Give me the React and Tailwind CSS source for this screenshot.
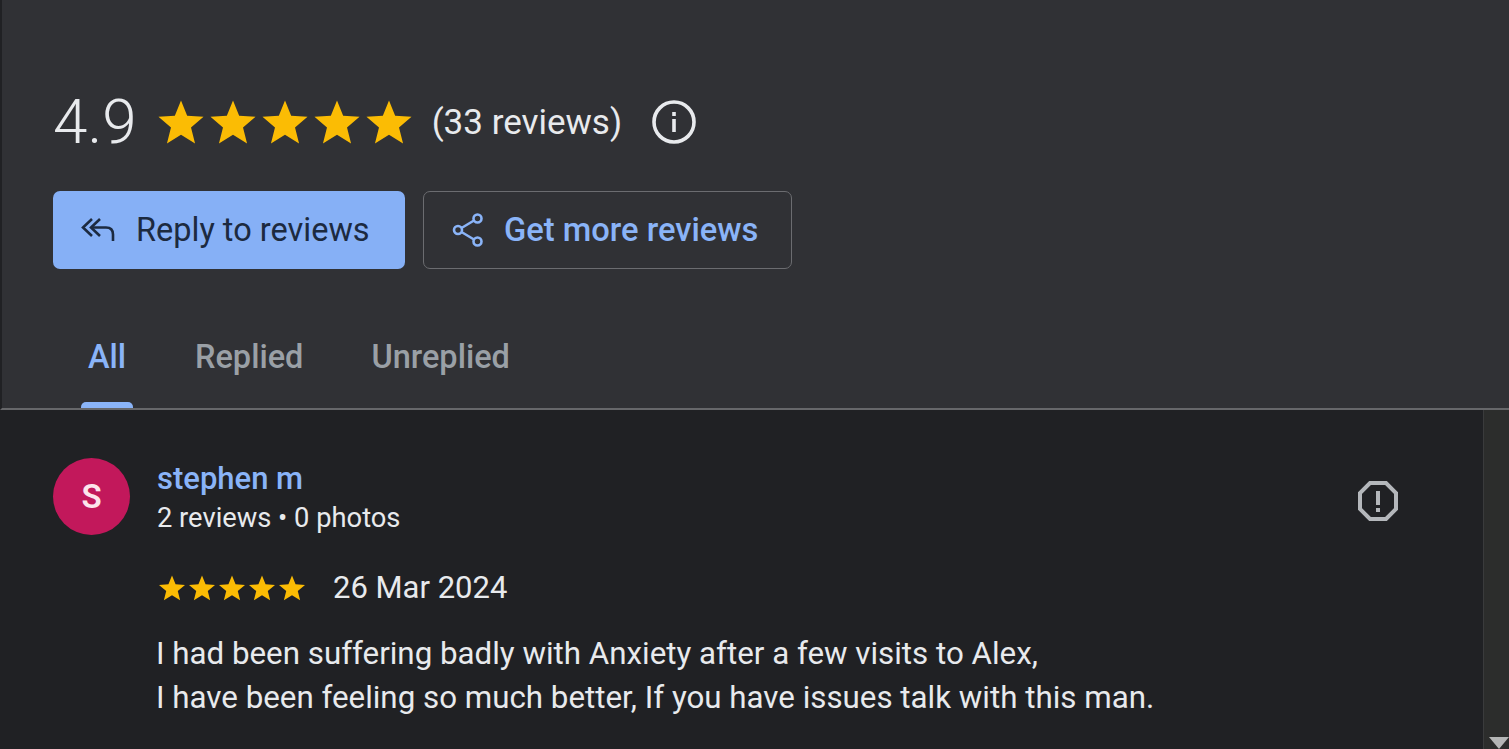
import React from 'react';

const Star = ({ size }) => (
    <svg width={size} height={size} viewBox="-1.5 -1.5 27 27" fill="#fbbc04">
        <path d="M12 .8l3.2 7.9 8.5.6-6.5 5.5 2.1 8.3L12 18.6l-7.3 4.5 2.1-8.3L.3 9.3l8.5-.6z" />
    </svg>
);

const Stars = ({ size, className }) => (
    <div className={`flex ${className}`}>
        {[0, 1, 2, 3, 4].map(i => <Star key={i} size={size} />)}
    </div>
);

const App = () => {
    return (
        <div className="w-[1509px] h-[749px] overflow-hidden flex flex-col bg-[#202124] text-[#e8eaed] font-['Roboto',sans-serif]">
            {/* Summary + tabs */}
            <div className="h-[410px] shrink-0 bg-[#303135] border-l-2 border-[#202124] border-b-2 border-b-[#66676a] pl-[51px] pt-[85px] flex flex-col">
                <div className="flex items-center h-[74px]">
                    <span className="text-[62px] font-[350] leading-none">4.9</span>
                    <Stars size={52} className="ml-[18px]" />
                    <span className="ml-[17px] text-[35px] leading-none">(33 reviews)</span>
                    <svg className="ml-[28px]" width="48" height="48" viewBox="0 0 48 48" fill="none">
                        <circle cx="24" cy="24" r="20" stroke="#e8eaed" strokeWidth="3.6" />
                        <rect x="22.2" y="21" width="3.6" height="13" fill="#e8eaed" />
                        <rect x="22.2" y="14" width="3.6" height="4" fill="#e8eaed" />
                    </svg>
                </div>
                <div className="flex mt-[32px] gap-[18px]">
                    <button className="w-[352px] h-[78px] rounded-[7px] bg-[#86b0f6] text-[#1c2a40] flex items-center pl-[27px] text-[32.5px] font-[450]">
                        <svg width="38" height="30" viewBox="0 0 38 30" fill="none" stroke="#1c2a40" strokeWidth="2.6">
                            <path d="M12 4L3 12.5l9 8.5" />
                            <path d="M20 4l-9 8.5 9 8.5" />
                            <path d="M11 12.5h15c5 0 7 3 7 7V26" />
                        </svg>
                        <span className="ml-[18px]">Reply to reviews</span>
                    </button>
                    <button className="w-[369px] h-[78px] rounded-[7px] border border-[#6b6c70] text-[#8ab4f8] flex items-center pl-[28px] text-[32.7px] font-medium">
                        <svg width="34" height="36" viewBox="0 0 34 36" fill="none" stroke="#8ab4f8" strokeWidth="2.6">
                            <circle cx="25.5" cy="6.5" r="4" />
                            <circle cx="6" cy="18" r="4" />
                            <circle cx="25.5" cy="29.5" r="4" />
                            <path d="M9.5 16l12.5-7.5M9.5 20L22 27.5" />
                        </svg>
                        <span className="ml-[18px] pt-[2px]">Get more reviews</span>
                    </button>
                </div>
                <div className="flex mt-[auto] h-[87px] text-[32.5px] font-medium text-[#9aa0a6]">
                    <div className="relative w-[52px] ml-[28px] flex justify-center pt-[12px] text-[#8ab4f8]">
                        All
                        <div className="absolute bottom-0 left-0 right-0 h-[6px] rounded-t-[5px] bg-[#8ab4f8]" />
                    </div>
                    <div className="ml-[62px] pt-[12px]">Replied</div>
                    <div className="ml-[68px] pt-[12px]">Unreplied</div>
                </div>
            </div>

            {/* Review list */}
            <div className="flex-1 flex min-h-0">
                <div className="flex-1 flex pl-[53px] pt-[48px]">
                    <div className="w-[77px] h-[77px] rounded-full bg-[#c2185b] flex items-center justify-center text-[33px] font-semibold text-[#fce4ec]">S</div>
                    <div className="ml-[27px] flex-1 text-[31.3px] leading-[44px]">
                        <div className="text-[#8ab4f8] text-[31px] font-medium leading-[40px] mt-[1px]">stephen m</div>
                        <div className="text-[27.3px] leading-[36px] mt-[1px]">2 reviews • 0 photos</div>
                        <div className="flex items-center mt-[34px] h-[36px]">
                            <Stars size={30} className="" />
                            <span className="ml-[26px] text-[31px]">26 Mar 2024</span>
                        </div>
                        <div className="mt-[26px] -ml-[1px]">I had been suffering badly with Anxiety after a few visits to Alex,</div>
                        <div className="-ml-[1px]">I have been feeling so much better, If you have issues talk with this man.</div>
                    </div>
                    <svg className="mt-[22px] mr-[84px]" width="42" height="42" viewBox="0 0 42 42" fill="none">
                        <path d="M13 3h16l10 10v16L29 39H13L3 29V13z" stroke="#b4b7bb" strokeWidth="4" />
                        <rect x="19" y="11" width="4" height="14" fill="#b4b7bb" />
                        <rect x="19" y="28" width="4" height="4" fill="#b4b7bb" />
                    </svg>
                </div>
                <div className="w-[26px] shrink-0 bg-[#2c2d2c] border-l border-[#3a3b3c] flex flex-col justify-end items-center">
                    <div className="w-0 h-0 ml-[4px] border-l-[10px] border-r-[10px] border-t-[12px] border-l-transparent border-r-transparent border-t-[#b5b6b6]" />
                </div>
            </div>
        </div>
    );
};

export default App;
